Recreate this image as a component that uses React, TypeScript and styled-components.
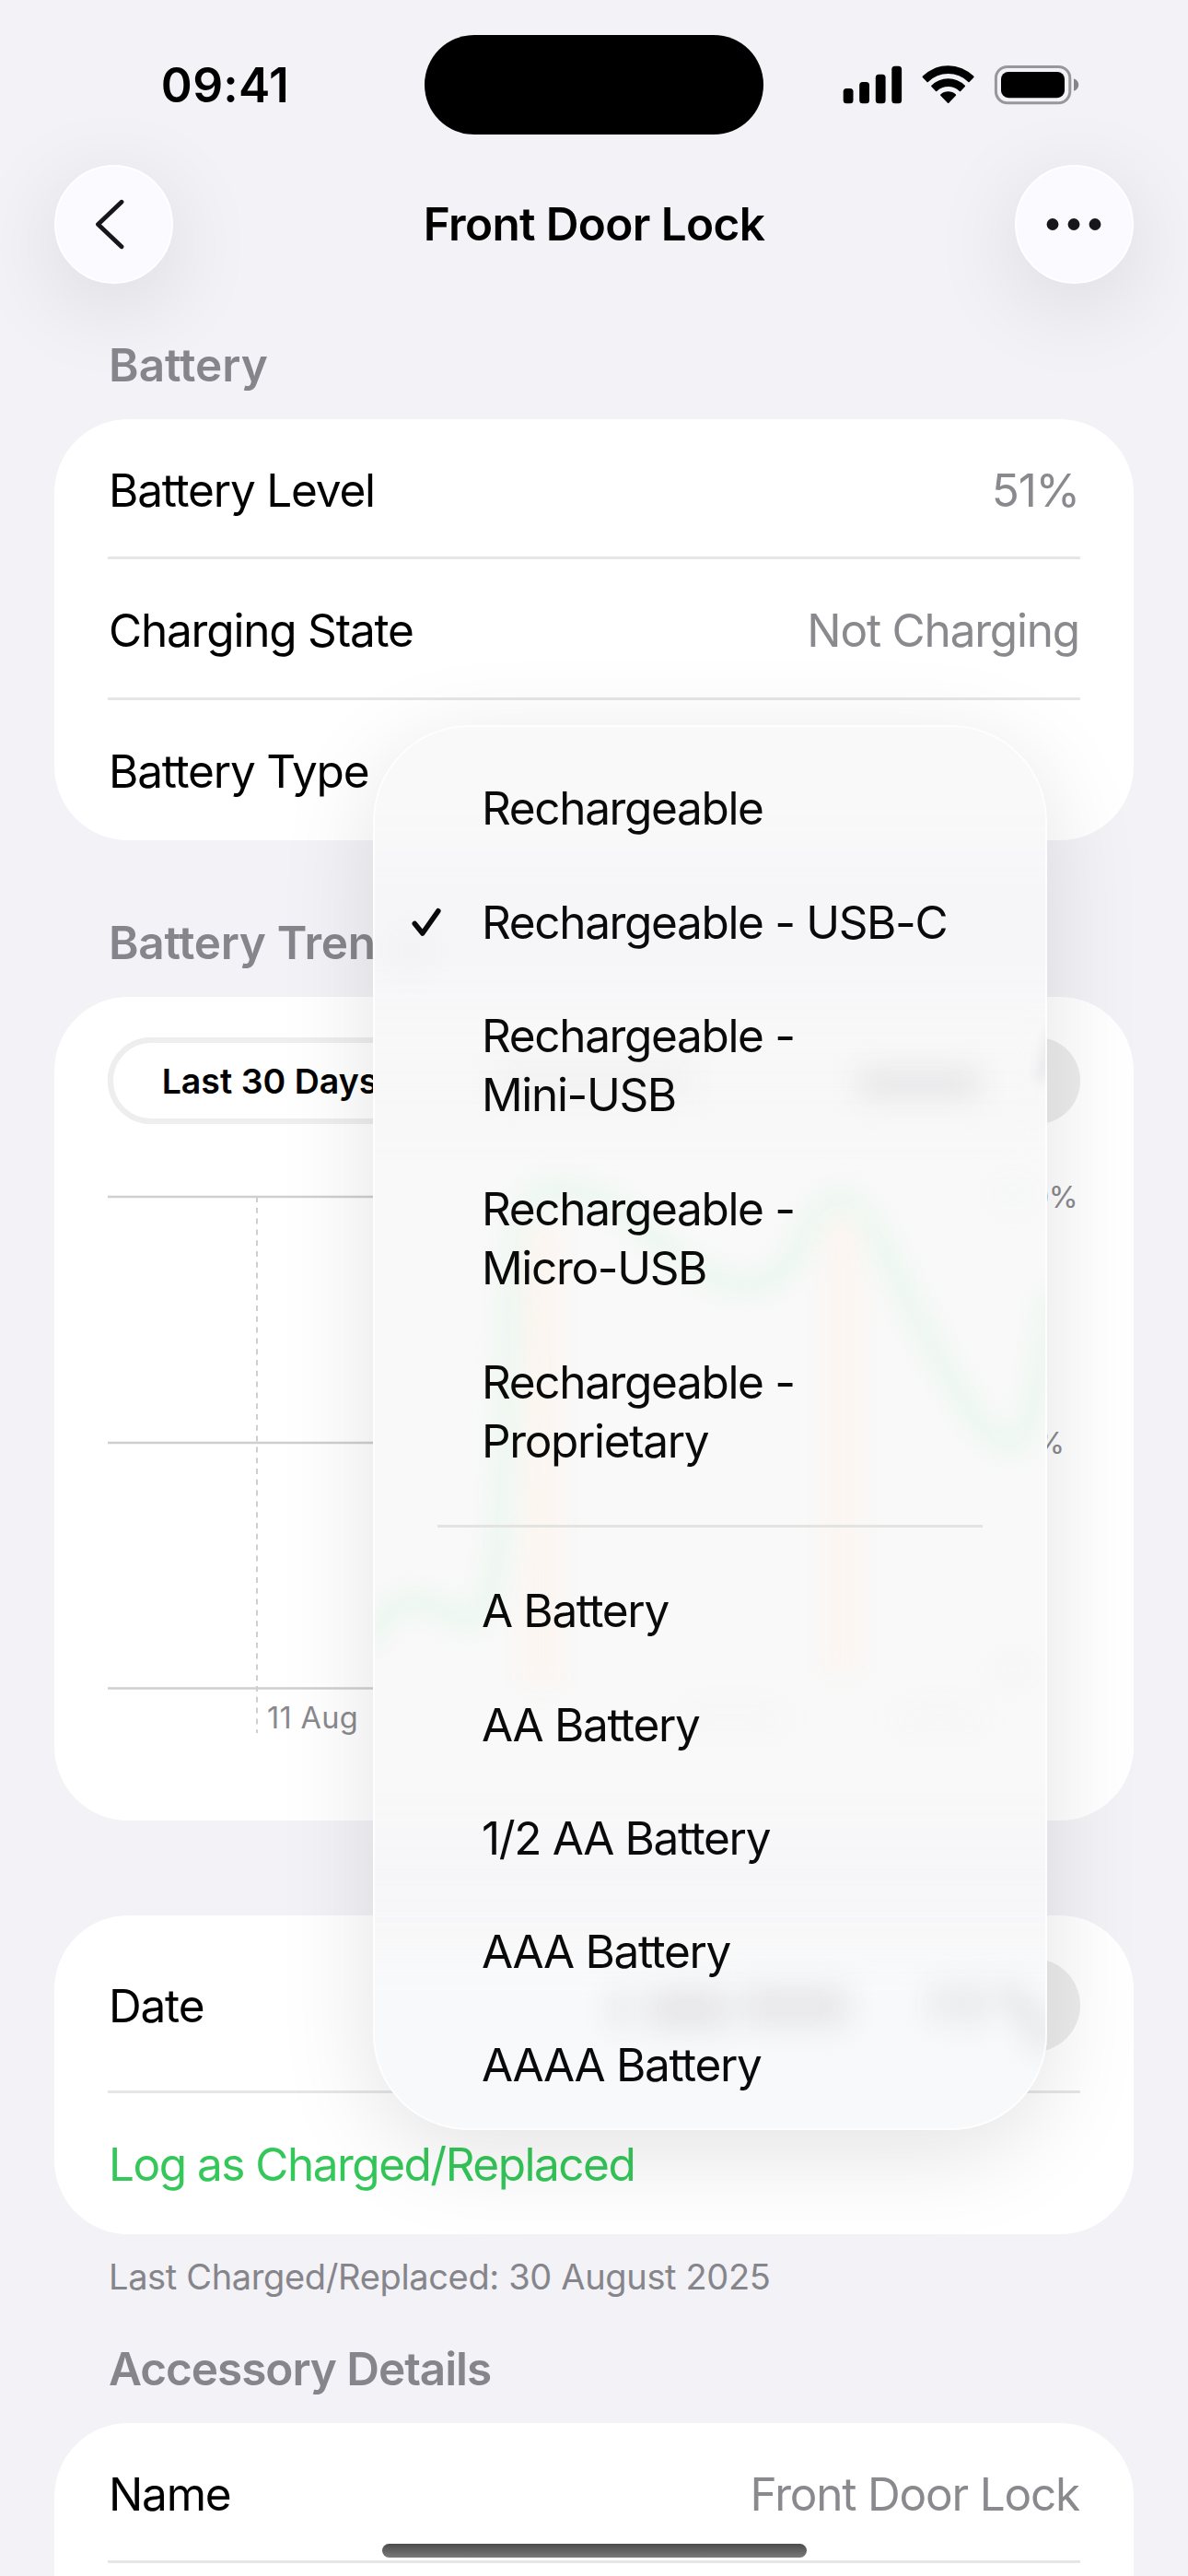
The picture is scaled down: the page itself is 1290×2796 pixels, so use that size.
import React from "react";
import styled, { createGlobalStyle } from "styled-components";

const GlobalStyle = createGlobalStyle`
  * { box-sizing: border-box; }
  html, body { margin: 0; padding: 0; background: #f2f2f7; }
  body {
    font-family: Inter, "Liberation Sans", sans-serif;
    color: #000;
    -webkit-font-smoothing: antialiased;
  }
`;

const Screen = styled.div`
  position: relative;
  width: 1290px;
  height: 2796px;
  overflow: hidden;
  background: #f2f2f7;
`;

const StatusBar = styled.header`
  display: grid;
  grid-template-columns: 461px 368px 1fr;
  align-items: center;
  height: 146px;
  padding-top: 37px;
`;

const Clock = styled.time`
  padding-left: 28px;
  text-align: center;
  font-size: 51.5px;
  font-weight: 600;
  line-height: 60px;
  letter-spacing: 0.3px;
`;

const Island = styled.div`
  height: 108px;
  border-radius: 54px;
  background: #000;
`;

const StatusIcons = styled.div`
  display: flex;
  padding-left: 86px;
`;

const NavBar = styled.nav`
  display: flex;
  align-items: center;
  justify-content: space-between;
  height: 130px;
  margin-top: 32px;
  padding: 0 59px;
`;

const RoundButton = styled.button`
  display: flex;
  align-items: center;
  justify-content: center;
  width: 129px;
  height: 129px;
  padding: 0;
  border: 2px solid #fff;
  border-radius: 50%;
  background: #fbfaff;
  box-shadow: 0 22px 100px rgba(0, 0, 0, 0.11);
`;

const Title = styled.h1`
  margin: 0;
  font-size: 49.5px;
  font-weight: 600;
  line-height: 60px;
  letter-spacing: -0.65px;
`;

const Content = styled.main`
  padding: 0 59px;
`;

const SectionTitle = styled.h2<{ $gap: number; $tracking?: number }>`
  margin: ${(p) => p.$gap}px 0 29px;
  padding-left: 59px;
  font-size: 49.5px;
  font-weight: 600;
  line-height: 60px;
  letter-spacing: ${(p) => p.$tracking ?? 0}px;
  color: #86858b;
`;

const Card = styled.section<{ $height: number; $gap?: number }>`
  display: flex;
  flex-direction: column;
  height: ${(p) => p.$height}px;
  margin-top: ${(p) => p.$gap ?? 0}px;
  padding: 0 58px;
  border-radius: 80px;
  background: #fff;
`;

const Row = styled.div<{ $height: number; $divided?: boolean }>`
  display: flex;
  flex: none;
  align-items: center;
  justify-content: space-between;
  height: ${(p) => p.$height}px;
  padding: 2px 1px 0;
  font-size: 49.5px;
  line-height: 60px;
  letter-spacing: -1.2px;
  box-shadow: ${(p) => (p.$divided ? "inset 0 -3px #e6e6e6" : "none")};
`;

const Value = styled.span`
  color: #8a898e;
`;

const ActionLabel = styled.span`
  letter-spacing: -1.5px;
  color: #34c759;
`;

const Pill = styled.span`
  width: 206px;
  height: 101px;
  margin-right: -1px;
  border-radius: 51px;
  background: #ececed;
`;

const Footnote = styled.p`
  margin: 23px 0 0;
  padding-left: 59px;
  font-size: 38px;
  line-height: 46px;
  letter-spacing: -0.35px;
  color: #86858b;
`;

const Segments = styled.div`
  display: grid;
  grid-template-columns: repeat(3, 1fr);
  flex: none;
  height: 94px;
  margin-top: 44px;
  border-radius: 47px;
  background: #ececed;
`;

const Segment = styled.span`
  display: flex;
  align-items: center;
  justify-content: center;
  border: 6px solid #eeeeee;
  border-radius: 47px;
  background: #fff;
  font-size: 37.5px;
  font-weight: 600;
  white-space: nowrap;
`;

const Chart = styled.svg`
  display: block;
  flex: none;
  font-size: 32.5px;
  overflow: visible;
`;

const Menu = styled.div`
  position: absolute;
  top: 787px;
  left: 405px;
  width: 732px;
  height: 1525px;
  padding: 29px 0 0;
  overflow: hidden;
  border-radius: 104px;
  background: #f9f9f9;
  box-shadow: 0 24px 105px rgba(0, 0, 0, 0.115);

  &::after {
    content: "";
    position: absolute;
    inset: 0;
    border: 2.5px solid rgba(255, 255, 255, 0.8);
    border-radius: inherit;
  }
`;

const Glass = styled.svg`
  position: absolute;
  inset: 0;
`;

const Haze = styled.g<{ $radius: number }>`
  filter: blur(${(p) => p.$radius}px);
`;

const MenuItem = styled.div`
  position: relative;
  display: grid;
  grid-template-columns: 118px 1fr;
  padding: 29.4px 60px 29.4px 0;
  font-size: 49.5px;
  line-height: 64.5px;
  letter-spacing: -1.35px;
  color: #0a0a0a;
  white-space: pre-line;
`;

const Mark = styled.span`
  display: flex;
  align-items: center;
  padding-left: 38px;
`;

const MenuDivider = styled.hr`
  position: relative;
  height: 3px;
  margin: 29.5px 70px 28.5px;
  border: 0;
  background: #e3e3e2;
`;

const HomeIndicator = styled.div`
  position: absolute;
  top: 2761px;
  left: 415px;
  width: 461px;
  height: 15px;
  border-radius: 8px;
  background: linear-gradient(#4b4b4b, #7a7a7a);
`;

const menuTop = [
  { label: "Rechargeable" },
  { label: "Rechargeable - USB-C", checked: true },
  { label: "Rechargeable -\nMini-USB" },
  { label: "Rechargeable -\nMicro-USB" },
  { label: "Rechargeable -\nProprietary" },
];

const menuBottom = [
  { label: "A Battery" },
  { label: "AA Battery" },
  { label: "1/2 AA Battery" },
  { label: "AAA Battery" },
  { label: "AAAA Battery" },
];

const gridLines = [79, 346, 612.5];

function StatusGlyphs() {
  return (
    <svg width="260" height="46" viewBox="915 68 260 46">
      <rect x="915.7" y="95" width="10.8" height="16.2" rx="3.5" />
      <rect x="933.2" y="88" width="10.8" height="23.2" rx="3.5" />
      <rect x="950.8" y="79.7" width="10.8" height="31.5" rx="3.5" />
      <rect x="968.3" y="70.8" width="10.8" height="40.4" rx="3.5" />
      <path d="M1002 81.6a39 39 0 0 1 55.2 0c.5.5.5 1.2 0 1.7l-4.6 4.7c-.4.4-.8.4-1.2 0a31 31 0 0 0-43.6 0c-.4.4-.8.4-1.2 0l-4.6-4.7c-.5-.5-.5-1.2 0-1.7z" />
      <path d="M1011.4 91.7a26 26 0 0 1 36.4 0c.4.4.4.9 0 1.3l-4.7 4.9c-.4.4-.8.4-1.2 0a18 18 0 0 0-24.6 0c-.4.4-.8.4-1.2 0l-4.7-4.9c-.4-.4-.4-.9 0-1.3z" />
      <path d="M1021.3 101.5a12.5 12.5 0 0 1 16.6 0c.4.4.4.9 0 1.3l-7.6 8c-.4.4-.9.4-1.3 0l-7.7-8c-.4-.4-.4-.9 0-1.3z" />
      <rect x="1081.4" y="71.4" width="80.4" height="39.4" rx="12.5" fill="none" stroke="#98979b" strokeWidth="3" />
      <rect x="1087" y="77" width="69" height="28.2" rx="8" />
      <path d="M1166 84.2c3.4 1.2 5.2 3.8 5.2 6.8s-1.8 5.6-5.2 6.8z" fill="#858488" />
    </svg>
  );
}

function TrendChart() {
  return (
    <Chart width="1056" height="740" viewBox="0 0 1056 740">
      <g stroke="#cfcfd0" strokeWidth="2.6">
        {gridLines.map((y) => (
          <line key={y} x1="0" x2="973" y1={y} y2={y} />
        ))}
      </g>
      <line x1="162" x2="162" y1="79" y2="661" stroke="#cfcfd0" strokeWidth="2" strokeDasharray="6 5.8" />
      <g fill="#8a898e">
        <text x="173" y="655.5" letterSpacing="0.3">11 Aug</text>
        <text x="969" y="90.5" letterSpacing="-0.5">100%</text>
        <text x="968" y="357.5" letterSpacing="-0.5">50%</text>
      </g>
    </Chart>
  );
}

/* Frosted view of the page content that lies under the menu. */
function MenuGlass() {
  return (
    <Glass width="732" height="1525" viewBox="405 787 732 1525">
      <Haze $radius={24}>
        <rect x="300" y="922" width="940" height="165" fill="#f6f6f9" />
        <rect x="300" y="1140" width="860" height="80" fill="#f7f7f8" />
        <rect x="300" y="1985" width="940" height="100" fill="#f6f6f9" />
        <rect x="300" y="2130" width="940" height="300" fill="#f8f9fb" />
      </Haze>
      <Haze $radius={13}>
        <path
          d="M395 1785C415 1755 430 1738 448 1737C475 1737 490 1764 518 1756C550 1725 550 1540 554 1410C558 1325 575 1292 600 1290C675 1290 705 1350 757 1378C807 1405 837 1400 862 1365C882 1320 897 1303 914 1300C947 1310 977 1400 1017 1470C1047 1520 1067 1562 1097 1568C1120 1566 1130 1500 1142 1400"
          fill="none"
          stroke="#ecf7f0"
          strokeWidth="26"
        />
        <rect x="567" y="1330" width="42" height="500" fill="#fcf5f0" />
        <rect x="896" y="1320" width="38" height="495" fill="#fcf5f0" />
      </Haze>
      <Haze $radius={7}>
        <path d="M1146 1118L1131 1172" stroke="#e2e2e5" strokeWidth="10" />
      </Haze>
      <Haze $radius={15}>
        <ellipse cx="447" cy="1032" rx="18" ry="18" fill="#f0f0f2" />
        <rect x="540" y="1155" width="210" height="36" fill="#f1f1f2" />
        <rect x="932" y="1160" width="132" height="32" fill="#e7e7e8" />
        <ellipse cx="1100" cy="1297" rx="22" ry="14" fill="#f5f6f8" />
        <ellipse cx="1100" cy="1812" rx="18" ry="14" fill="#f4f5f7" />
        <rect x="740" y="1854" width="110" height="22" fill="#f6f6f7" />
        <rect x="975" y="1854" width="90" height="22" fill="#f6f6f7" />
        <rect x="664" y="2160" width="22" height="42" fill="#e8e8e9" />
        <rect x="704" y="2158" width="88" height="46" fill="#e7e7e8" />
        <rect x="806" y="2155" width="115" height="46" fill="#e8e8e9" />
        <rect x="1010" y="2152" width="22" height="44" fill="#e9e9eb" />
        <rect x="1042" y="2152" width="26" height="46" fill="#e7e7e9" />
        <path d="M1084 2160C1108 2170 1124 2190 1136 2225" fill="none" stroke="#e6e6e8" strokeWidth="26" />
      </Haze>
    </Glass>
  );
}

function Checkmark() {
  return (
    <svg width="40" height="40" viewBox="443 982 40 40" fill="none" stroke="#0a0a0a" strokeWidth="5.6" strokeLinecap="round" strokeLinejoin="round">
      <path d="M450.3 1003.5L458.8 1014L475.8 989.8" />
    </svg>
  );
}

function Item({ label, checked }: { label: string; checked?: boolean }) {
  return (
    <MenuItem>
      <Mark>{checked && <Checkmark />}</Mark>
      <span>{label}</span>
    </MenuItem>
  );
}

export default function App() {
  return (
    <Screen>
      <GlobalStyle />
      <StatusBar>
        <Clock>09:41</Clock>
        <Island />
        <StatusIcons>
          <StatusGlyphs />
        </StatusIcons>
      </StatusBar>
      <NavBar>
        <RoundButton aria-label="Back">
          <svg width="60" height="60" viewBox="0 0 60 60" fill="none" stroke="#17161b" strokeWidth="4.8" strokeLinecap="round" strokeLinejoin="round">
            <path d="M38 6.2L12.5 30.5L38 54.8" />
          </svg>
        </RoundButton>
        <Title>Front Door Lock</Title>
        <RoundButton aria-label="More">
          <svg width="60" height="60" viewBox="0 0 60 60" fill="#17161b">
            <circle cx="7" cy="30.5" r="6.4" />
            <circle cx="30" cy="30.5" r="6.4" />
            <circle cx="53" cy="30.5" r="6.4" />
          </svg>
        </RoundButton>
      </NavBar>
      <Content>
        <SectionTitle $gap={58}>Battery</SectionTitle>
        <Card $height={457}>
          <Row $height={152.3} $divided>
            <span>Battery Level</span>
            <Value>51%</Value>
          </Row>
          <Row $height={152.3} $divided>
            <span>Charging State</span>
            <Value>Not Charging</Value>
          </Row>
          <Row $height={152.3}>
            <span>Battery Type</span>
          </Row>
        </Card>
        <SectionTitle $gap={81} $tracking={-0.3}>Battery Trends</SectionTitle>
        <Card $height={894}>
          <Segments>
            <Segment>Last 30 Days</Segment>
          </Segments>
          <TrendChart />
        </Card>
        <Card $height={346} $gap={103}>
          <Row $height={193} $divided>
            <span>Date</span>
            <Pill />
          </Row>
          <Row $height={152.5}>
            <ActionLabel>Log as Charged/Replaced</ActionLabel>
          </Row>
        </Card>
        <Footnote>Last Charged/Replaced: 30 August 2025</Footnote>
        <SectionTitle $gap={47} $tracking={-1.05}>Accessory Details</SectionTitle>
        <Card $height={457}>
          <Row $height={152.3} $divided>
            <span>Name</span>
            <Value>Front Door Lock</Value>
          </Row>
        </Card>
      </Content>
      <Menu>
        <MenuGlass />
        {menuTop.map((m) => (
          <Item key={m.label} {...m} />
        ))}
        <MenuDivider />
        {menuBottom.map((m) => (
          <Item key={m.label} {...m} />
        ))}
      </Menu>
      <HomeIndicator />
    </Screen>
  );
}
